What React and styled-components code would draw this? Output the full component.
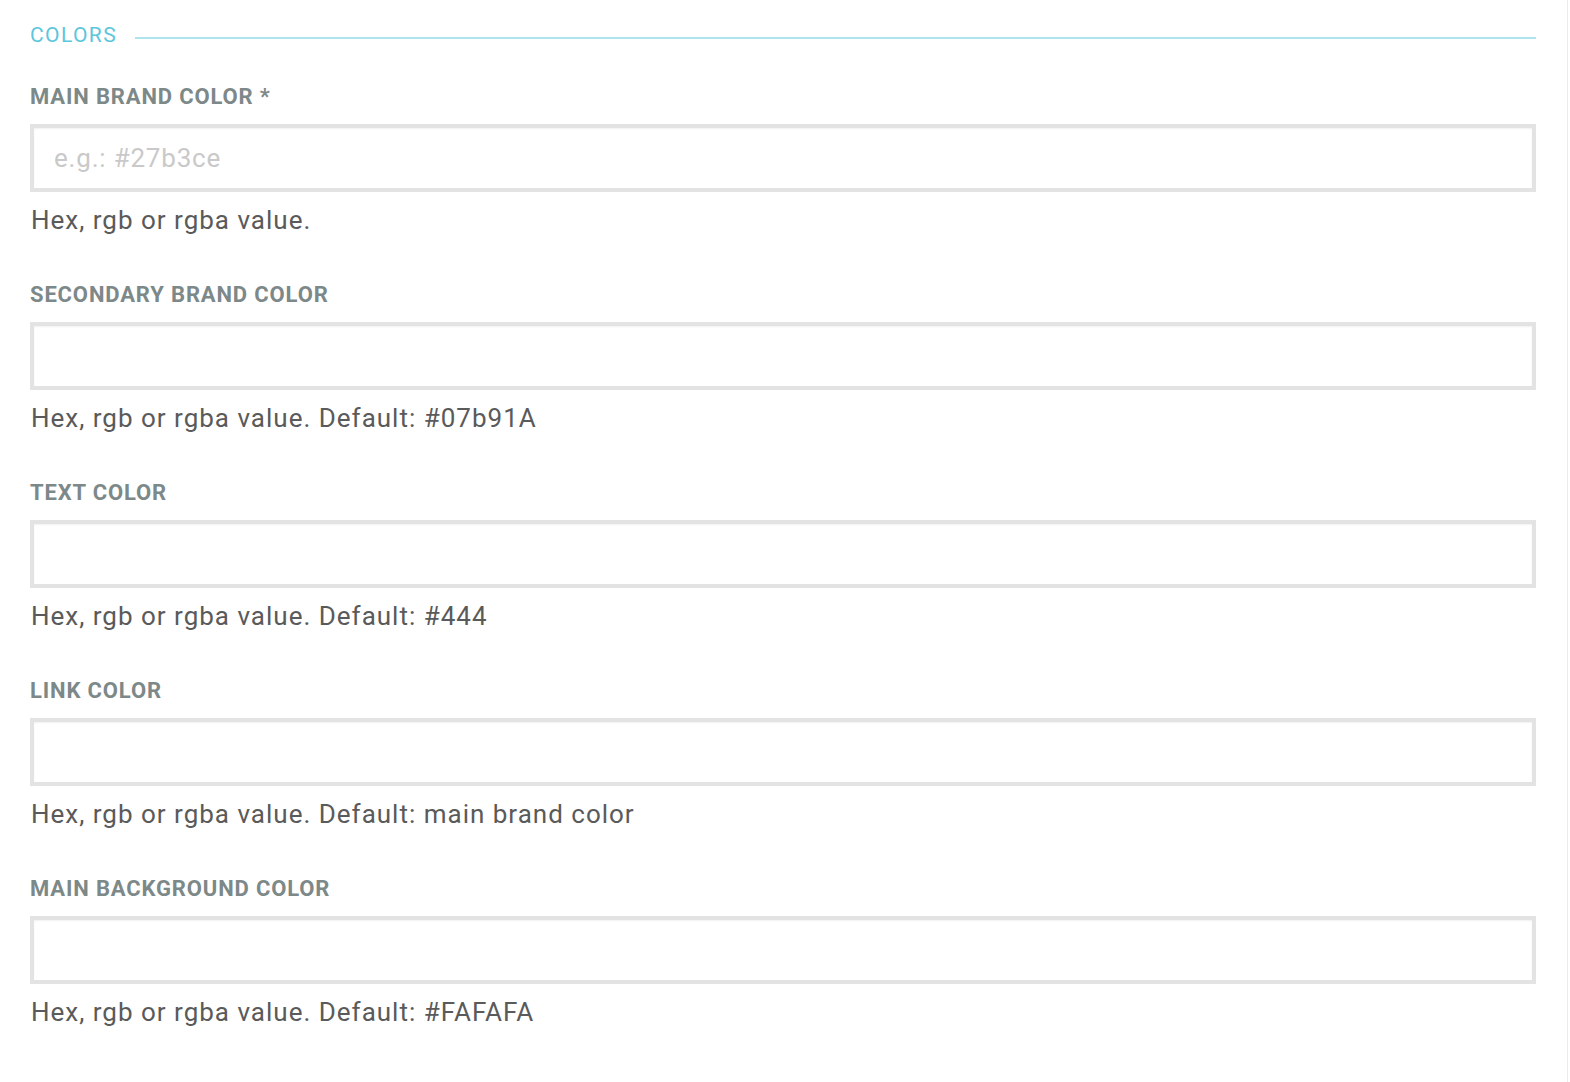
import React from 'react';
import styled, { createGlobalStyle } from 'styled-components';

const GlobalStyle = createGlobalStyle`
  html, body {
    margin: 0;
    padding: 0;
    background: #fff;
  }
  body {
    font-family: Roboto, 'Noto Sans', sans-serif;
  }
`;

const Page = styled.div`
  box-sizing: border-box;
  width: 1568px;
  min-height: 1082px;
  padding: 20px 31px 40px 30px;
  border-right: 1px solid #ececec;
`;

const SectionHead = styled.div`
  display: flex;
  align-items: center;
  gap: 18px;
  margin-bottom: 35px;
`;

const SectionTitle = styled.h3`
  margin: 0;
  font-size: 21px;
  line-height: 30px;
  font-weight: 400;
  color: #5cc6dc;
  letter-spacing: 1.4px;
`;

const Rule = styled.div`
  flex: 1;
  height: 2px;
  margin-top: 6px;
  background: #aee4ec;
`;

const Field = styled.div`
  display: flex;
  flex-direction: column;
  margin-bottom: 48px;
`;

const Label = styled.label`
  font-size: 22px;
  line-height: 24px;
  font-weight: 700;
  color: #7d8888;
  text-transform: uppercase;
  letter-spacing: 0.85px;
  margin-bottom: 15px;
`;

const Input = styled.input`
  box-sizing: border-box;
  width: 100%;
  height: 68px;
  border: 4px solid #e3e3e3;
  box-shadow: inset 0 1px 2px rgba(0, 0, 0, 0.06);
  background: #fff;
  padding: 0 20px;
  font-family: inherit;
  font-size: 26px;
  letter-spacing: 0.8px;
  color: #444;
  outline: none;

  &::placeholder {
    color: #c9c9c9;
  }
`;

const Help = styled.p`
  margin: 13px 0 0 1px;
  font-size: 26px;
  line-height: 30px;
  color: #5a5a5a;
  letter-spacing: 1px;
`;

const fields = [
  { label: 'Main brand color *', placeholder: 'e.g.: #27b3ce', help: 'Hex, rgb or rgba value.' },
  { label: 'Secondary brand color', help: 'Hex, rgb or rgba value. Default: #07b91A' },
  { label: 'Text color', help: 'Hex, rgb or rgba value. Default: #444' },
  { label: 'Link color', help: 'Hex, rgb or rgba value. Default: main brand color' },
  { label: 'Main background color', help: 'Hex, rgb or rgba value. Default: #FAFAFA' },
];

export default function App() {
  return (
    <>
      <GlobalStyle />
      <Page>
        <SectionHead>
          <SectionTitle>COLORS</SectionTitle>
          <Rule />
        </SectionHead>
        {fields.map((f, i) => (
          <Field key={i}>
            <Label>{f.label}</Label>
            <Input type="text" placeholder={f.placeholder || ''} />
            <Help>{f.help}</Help>
          </Field>
        ))}
      </Page>
    </>
  );
}
